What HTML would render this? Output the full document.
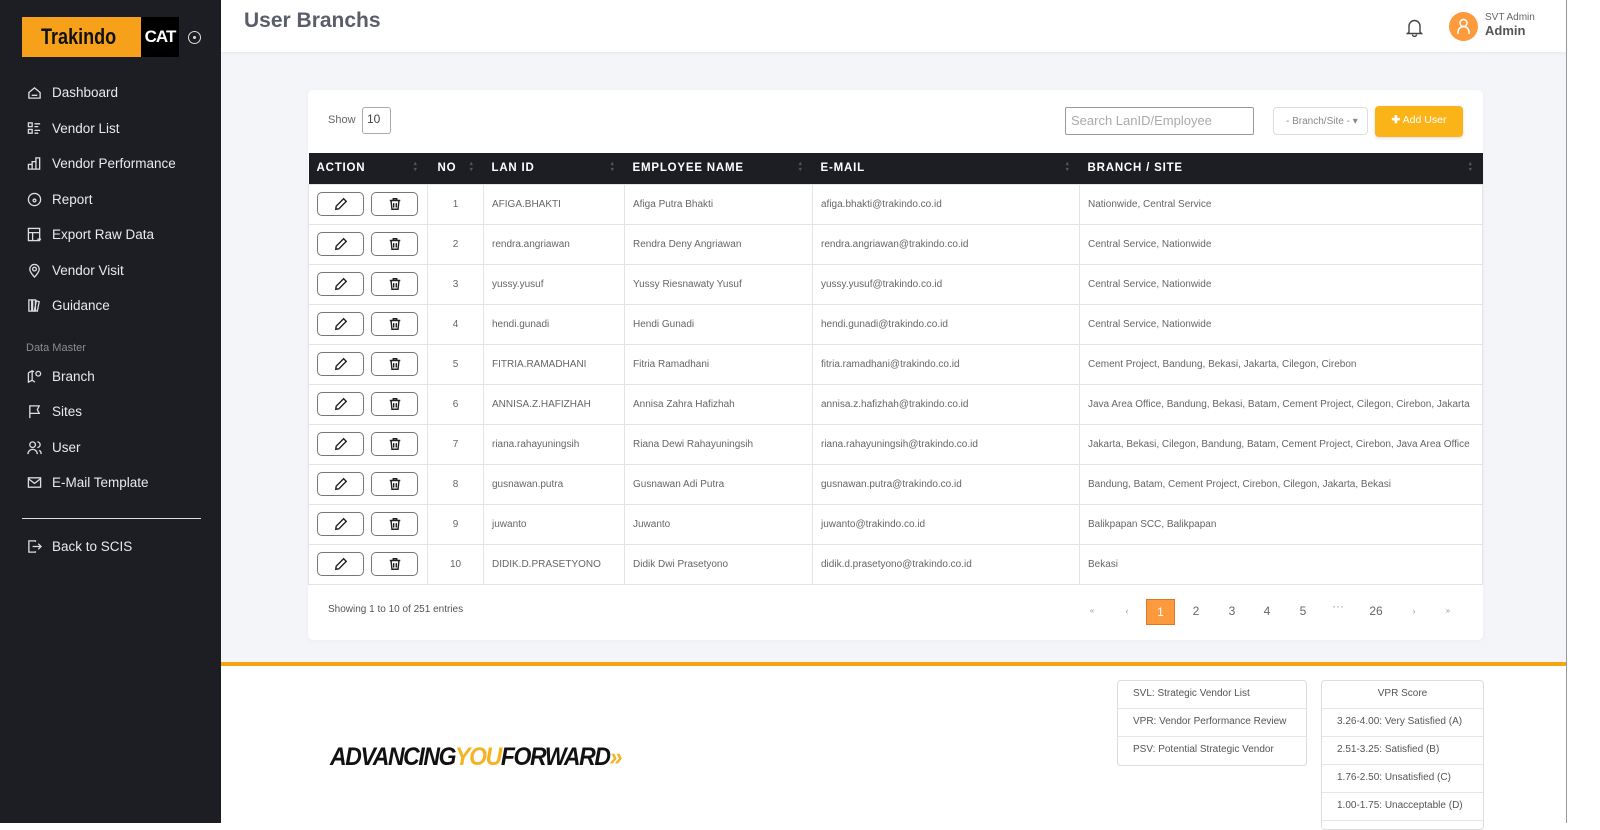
<!DOCTYPE html>
<html><head><meta charset="utf-8"><style>
*{box-sizing:border-box;margin:0;padding:0}
body{width:1600px;height:823px;overflow:hidden;font-family:"Liberation Sans",sans-serif;background:#fff;position:relative}
.sb{position:absolute;left:0;top:0;width:221px;height:823px;background:#1c1e23;color:#e9eaec}
.logo{position:absolute;left:22px;top:17px;width:157px;height:40px;background:#f7a11a}
.logo .t{position:absolute;left:19px;top:7px;font-weight:bold;font-size:22px;color:#111;transform:scaleX(.82);transform-origin:left}
.logo .c{position:absolute;right:0;top:0;width:38px;height:40px;background:#000;color:#fff;font-weight:bold;font-size:17px;text-align:center;line-height:40px;letter-spacing:-1px}
.tog{position:absolute;left:188px;top:31px;width:13px;height:13px;border:1.5px solid #ddd;border-radius:50%}
.tog:after{content:"";position:absolute;left:3.5px;top:3.5px;width:3px;height:3px;background:#ddd;border-radius:50%}
.mi{position:absolute;left:27px;font-size:13.5px;color:#e9eaec;display:flex;align-items:center}
.mi svg{width:15px;height:15px;margin-right:10px;stroke:#ddd;fill:none;stroke-width:1.4}
.dm{position:absolute;left:26px;top:342px;font-size:11px;color:#8a8c92}
.hr{position:absolute;left:22px;top:518px;width:179px;height:1px;background:#ddd}
.main{position:absolute;left:221px;top:0;width:1345px;height:662px;background:#f4f5f8}
.hd{position:absolute;left:221px;top:0;width:1345px;height:52px;background:#fff;box-shadow:0 1px 3px rgba(0,0,0,.06)}
.hd h1{position:absolute;left:23px;top:9px;font-size:21px;color:#5b5d6b;font-weight:bold}
.card{position:absolute;left:308px;top:90px;width:1175px;height:550px;background:#fff;border-radius:5px;box-shadow:0 1px 4px rgba(0,0,0,.04)}
table{position:absolute;left:308px;top:153px;width:1175px;border-collapse:collapse;font-family:"Liberation Sans",sans-serif;font-size:10px;color:#666;table-layout:fixed}
th{background:#1c1e23;color:#fff;height:31px;text-align:left;font-size:11.5px;letter-spacing:.8px;padding-left:8px;position:relative}
th:after{content:"▴\A▾";white-space:pre;position:absolute;right:10px;top:8px;font-size:6px;line-height:6px;color:#555}
td{height:40px;border:1px solid #e3e3e3;padding-left:8px;white-space:nowrap;overflow:hidden}
td.n{text-align:center;padding:0}
.ab{display:inline-block;width:47px;height:24px;border:1px solid #777;border-radius:5px;vertical-align:middle;margin-right:7px;text-align:center;padding-top:4px}
.ab svg{width:14px;height:14px;stroke:#222;fill:none;stroke-width:1.6}
.pg{position:absolute;top:599px;font-size:12px;color:#666;width:30px;height:26px;line-height:24px;text-align:center}
.ft{position:absolute;left:221px;top:662px;width:1345px;height:4px;background:#f5a30f}
.box{position:absolute;border:1px solid #ddd;border-radius:4px;background:#fff;font-size:10px;color:#555}
.box div{height:28px;line-height:26px;border-bottom:1px solid #e5e5e5;padding-left:15px}
</style></head><body>
<div class="main"></div>
<div style="position:absolute;left:1566px;top:0;width:1px;height:823px;background:#999"></div>
<div class="hd"><h1>User Branchs</h1>
<svg style="position:absolute;left:1185px;top:18px" width="17" height="19" viewBox="0 0 17 19" fill="none" stroke="#444" stroke-width="1.4"><path d="M3 14V8a5.5 5.5 0 0111 0v6l1.5 1.5h-14z M6.5 16.5a2 2 0 004 0"/></svg>
<div style="position:absolute;left:1228px;top:12px;width:29px;height:29px;border-radius:50%;background:#fd9a3e"><svg width="29" height="29" viewBox="0 0 29 29" fill="none" stroke="#fff" stroke-width="1.5"><circle cx="14.5" cy="11" r="3.5"/><path d="M9 22v-2a5.5 5.5 0 0111 0v2"/></svg></div>
<div style="position:absolute;left:1264px;top:12px;font-size:10px;color:#666">SVT Admin</div>
<div style="position:absolute;left:1264px;top:23px;font-size:13px;font-weight:bold;color:#555">Admin</div>
</div>
<div class="sb">
<div class="logo"><span class="t">Trakindo</span><span class="c">CAT</span></div><div class="tog"></div>
<div class="mi" style="top:85px"><svg viewBox="0 0 16 16"><path d="M2 8l6-5 6 5v6H2z M5 11h6"/></svg>Dashboard</div>
<div class="mi" style="top:121px"><svg viewBox="0 0 16 16"><rect x="1.5" y="2" width="4" height="4"/><rect x="1.5" y="9" width="4" height="4"/><path d="M8 3h6M8 6h4M8 10h6M8 13h4"/></svg>Vendor List</div>
<div class="mi" style="top:156px"><svg viewBox="0 0 16 16"><path d="M1.5 14V9h4v5zM5.5 14V6h4v8zM9.5 14V2h4v12z"/></svg>Vendor Performance</div>
<div class="mi" style="top:192px"><svg viewBox="0 0 16 16"><circle cx="8" cy="8" r="6.5"/><circle cx="8" cy="9" r="1.5"/></svg>Report</div>
<div class="mi" style="top:227px"><svg viewBox="0 0 16 16"><rect x="1.5" y="1.5" width="12" height="13"/><path d="M1.5 6h12M6 6v8.5M11 13h4"/></svg>Export Raw Data</div>
<div class="mi" style="top:263px"><svg viewBox="0 0 16 16"><path d="M8 15s5-5 5-8.5a5 5 0 00-10 0C3 10 8 15 8 15z"/><circle cx="8" cy="6.5" r="2"/></svg>Vendor Visit</div>
<div class="mi" style="top:298px"><svg viewBox="0 0 16 16"><path d="M2 2h3v12H2zM6 2h3v12H6zM10 3l3 1-2 10-3-1z"/></svg>Guidance</div>
<div class="dm">Data Master</div>
<div class="mi" style="top:369px"><svg viewBox="0 0 16 16"><path d="M1.5 4v10l4-2 3 2M5.5 2v10M1.5 4l4-2 2 1"/><circle cx="12" cy="5" r="2.5"/></svg>Branch</div>
<div class="mi" style="top:404px"><svg viewBox="0 0 16 16"><path d="M3 15V2h10l-2 4 2 4H3"/></svg>Sites</div>
<div class="mi" style="top:440px"><svg viewBox="0 0 16 16"><circle cx="6" cy="5" r="3"/><path d="M1 15a5 5 0 0110 0M11 2a3 3 0 010 6M13 11a4 4 0 012 4"/></svg>User</div>
<div class="mi" style="top:475px"><svg viewBox="0 0 16 16"><rect x="1.5" y="3" width="13" height="10"/><path d="M1.5 4l6.5 5 6.5-5"/></svg>E-Mail Template</div>
<div class="hr"></div>
<div class="mi" style="top:539px"><svg viewBox="0 0 16 16"><path d="M9 3V2H2v12h7v-1M6 8h9M12 5l3 3-3 3"/></svg>Back to SCIS</div>
</div>
<div class="card"></div>
<div style="position:absolute;left:328px;top:114px;font-size:11px;color:#666">Show</div>
<div style="position:absolute;left:362px;top:107px;width:29px;height:27px;border:1px solid #aaa;border-radius:3px;font-size:12px;color:#444;padding:4px 0 0 4px">10</div>
<div style="position:absolute;left:1065px;top:107px;width:189px;height:28px;border:1px solid #999;border-radius:2px;font-size:13px;color:#aaa;padding:5px 5px">Search LanID/Employee</div>
<div style="position:absolute;left:1273px;top:107px;width:95px;height:28px;border:1px solid #ddd;border-radius:4px;font-size:10px;color:#888;padding:8px 0 0 12px">- Branch/Site - ▾</div>
<div style="position:absolute;left:1375px;top:106px;width:88px;height:31px;background:#fbb417;border-radius:4px;font-size:10.5px;color:#fff;text-align:center;line-height:29px;box-shadow:0 1px 3px rgba(0,0,0,.15)"><b>✚</b> Add User</div>
<table>
<colgroup><col style="width:119px"><col style="width:56px"><col style="width:141px"><col style="width:188px"><col style="width:267px"><col></colgroup>
<tr><th>ACTION</th><th style="padding-left:10px">NO</th><th>LAN ID</th><th>EMPLOYEE NAME</th><th>E-MAIL</th><th>BRANCH / SITE</th></tr>
<tbody id="tb"></tbody>
</table>
<script>
var d=[["AFIGA.BHAKTI","Afiga Putra Bhakti","afiga.bhakti@trakindo.co.id","Nationwide, Central Service"],["rendra.angriawan","Rendra Deny Angriawan","rendra.angriawan@trakindo.co.id","Central Service, Nationwide"],["yussy.yusuf","Yussy Riesnawaty Yusuf","yussy.yusuf@trakindo.co.id","Central Service, Nationwide"],["hendi.gunadi","Hendi Gunadi","hendi.gunadi@trakindo.co.id","Central Service, Nationwide"],["FITRIA.RAMADHANI","Fitria Ramadhani","fitria.ramadhani@trakindo.co.id","Cement Project, Bandung, Bekasi, Jakarta, Cilegon, Cirebon"],["ANNISA.Z.HAFIZHAH","Annisa Zahra Hafizhah","annisa.z.hafizhah@trakindo.co.id","Java Area Office, Bandung, Bekasi, Batam, Cement Project, Cilegon, Cirebon, Jakarta"],["riana.rahayuningsih","Riana Dewi Rahayuningsih","riana.rahayuningsih@trakindo.co.id","Jakarta, Bekasi, Cilegon, Bandung, Batam, Cement Project, Cirebon, Java Area Office"],["gusnawan.putra","Gusnawan Adi Putra","gusnawan.putra@trakindo.co.id","Bandung, Batam, Cement Project, Cirebon, Cilegon, Jakarta, Bekasi"],["juwanto","Juwanto","juwanto@trakindo.co.id","Balikpapan SCC, Balikpapan"],["DIDIK.D.PRASETYONO","Didik Dwi Prasetyono","didik.d.prasetyono@trakindo.co.id","Bekasi"]];
var pen='<svg viewBox="0 0 16 16"><path d="M11 2l3 3-8.5 8.5L2 14l.5-3.5z"/></svg>',tr='<svg viewBox="0 0 16 16"><path d="M2 4h12M6 4V2h4v2M3.5 4l1 10h7l1-10M6.5 7v5M9.5 7v5"/></svg>';
var h='';d.forEach(function(r,i){h+='<tr><td><span class="ab">'+pen+'</span><span class="ab">'+tr+'</span></td><td class="n">'+(i+1)+'</td><td>'+r[0]+'</td><td>'+r[1]+'</td><td>'+r[2]+'</td><td>'+r[3]+'</td></tr>'});
document.getElementById('tb').innerHTML=h;
</script>
<div style="position:absolute;left:328px;top:604px;font-size:10px;color:#555">Showing 1 to 10 of 251 entries</div>
<div class="pg" style="left:1077px;font-size:8px;color:#999">«</div>
<div class="pg" style="left:1112px;font-size:9px;color:#999">‹</div>
<div class="pg" style="left:1146px;width:29px;background:#fd9a3e;border:1px solid #d8792a;color:#fff">1</div>
<div class="pg" style="left:1181px">2</div>
<div class="pg" style="left:1217px">3</div>
<div class="pg" style="left:1252px">4</div>
<div class="pg" style="left:1288px">5</div>
<div class="pg" style="left:1323px;top:594px;color:#999">···</div>
<div class="pg" style="left:1361px">26</div>
<div class="pg" style="left:1399px;font-size:9px;color:#999">›</div>
<div class="pg" style="left:1433px;font-size:8px;color:#999">»</div>
<div class="ft"></div>
<div style="position:absolute;left:330px;top:743px;font-size:25px;font-weight:bold;font-style:italic;letter-spacing:-1.5px;color:#111;transform:scaleX(.92);transform-origin:left">ADVANCING<span style="color:#f5b324">YOU</span>FORWARD<span style="color:#f5b324">»</span></div>
<div class="box" style="left:1117px;top:680px;width:190px"><div>SVL: Strategic Vendor List</div><div>VPR: Vendor Performance Review</div><div style="border:0">PSV: Potential Strategic Vendor</div></div>
<div class="box" style="left:1321px;top:680px;width:163px;height:150px"><div style="text-align:center;padding:0">VPR Score</div><div>3.26-4.00: Very Satisfied (A)</div><div>2.51-3.25: Satisfied (B)</div><div>1.76-2.50: Unsatisfied (C)</div><div>1.00-1.75: Unacceptable (D)</div></div>
</body></html>
